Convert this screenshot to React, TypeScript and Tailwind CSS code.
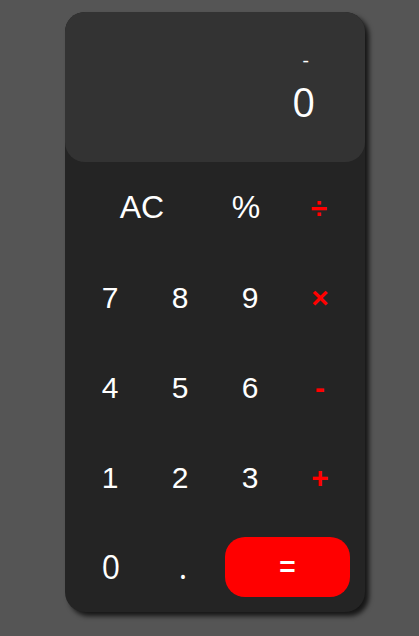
import React from "react";

const sans = { fontFamily: '"Liberation Sans", Arial, sans-serif' };

export default function App() {
  const cell = "flex items-center justify-center h-[90px] text-[30px] text-white font-['Liberation_Sans',Arial,sans-serif]";
  const op = "flex items-center justify-center h-[90px] text-[30px] font-bold text-[#ff0000] font-['Liberation_Sans',Arial,sans-serif]";
  return (
    <div className="w-[419px] h-[636px] bg-[#555555] flex justify-start pl-[65px] pt-[12px]">
      <div className="w-[300px] h-[600px] bg-[#242424] rounded-[20px] shadow-[4px_4px_5px_rgba(0,0,0,0.75)] flex flex-col">
        <div className="h-[150px] bg-[#333333] rounded-[20px] flex flex-col items-end pr-[50px] pt-[38px] font-['Open_Sans',sans-serif] text-white">
          <div className="text-[20px] leading-[20px] mr-[6px]">-</div>
          <div className="text-[40px] leading-[40px] mt-[12px]">0</div>
        </div>
        <div className="grid grid-cols-4 px-[10px]">
          <div className={`${cell} col-span-2 pr-[6px] !text-[32px]`}>AC</div>
          <div className={`${cell} pr-[8px] !text-[32px]`}>%</div>
          <div className={`${op} pr-[2px]`}>÷</div>
          <div className={cell}>7</div>
          <div className={cell}>8</div>
          <div className={cell}>9</div>
          <div className={op}>×</div>
          <div className={cell}>4</div>
          <div className={cell}>5</div>
          <div className={cell}>6</div>
          <div className={op}>-</div>
          <div className={cell}>1</div>
          <div className={cell}>2</div>
          <div className={cell}>3</div>
          <div className={op}>+</div>
          <div className="flex items-center justify-center h-[90px] text-[32px] text-white font-['Open_Sans',sans-serif] pl-[2px]">0</div>
          <div className="flex items-center justify-center h-[90px] text-[32px] text-white font-['Open_Sans',sans-serif] pl-[6px]">.</div>
          <div className="col-span-2 flex items-center h-[90px] pl-[10px]">
            <div className="w-[125px] h-[60px] rounded-[20px] bg-[#ff0000] flex items-center justify-center text-white text-[28px] font-bold" style={sans}>=</div>
          </div>
        </div>
      </div>
    </div>
  );
}
